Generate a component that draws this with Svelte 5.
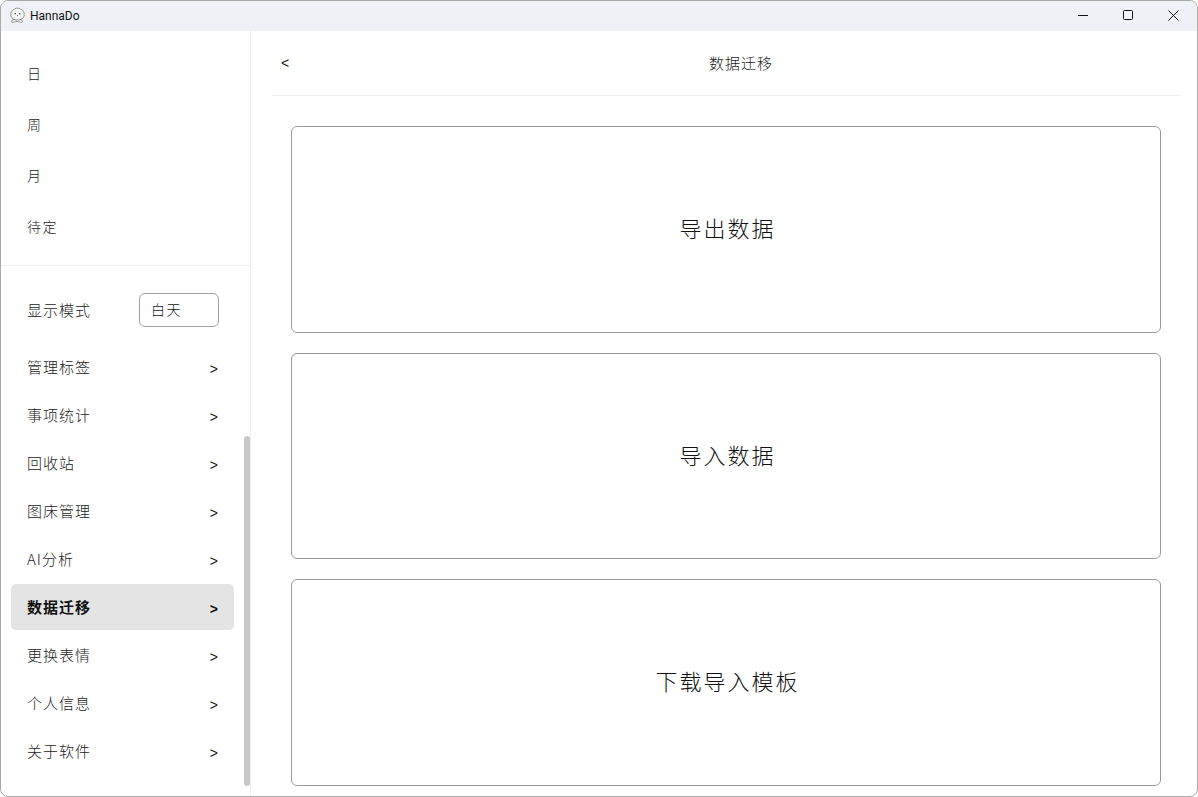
<script>
  const top = ['日', '周', '月', '待定'];
  const rows = ['管理标签', '事项统计', '回收站', '图床管理', 'AI分析', '数据迁移', '更换表情', '个人信息', '关于软件'];
  const active = '数据迁移';
  const cards = ['导出数据', '导入数据', '下载导入模板'];
</script>

<div class="window">
  <header class="titlebar">
    <div class="brand">
      <svg class="logo" viewBox="0 0 17 17" width="17" height="17" fill="#f6f6f6" stroke="#666" stroke-width="0.7">
        <path d="M5 12.500c-1.500.2-2.800 1-2.500 2.200.4 1 2 .9 3 .2.600.4 1.200-.1 1.500-.5h2c.3.400.9.900 1.500.5 1 .7 2.600.8 3-.2.300-1.200-1-2-2.500-2.200z"/>
        <path d="M5 2.700C6 1.300 7.300 1 8.500 1.300 9.700 1 11 1.300 12 2.700c1.200-.1 2 .8 2 1.800 1.200.6 1.600 1.900 1 2.900.6 1.100.2 2.400-1 2.900-.2 1.100-1 1.700-2 1.700-.7 1-2.200 1.200-3.500.8-1.300.4-2.800.2-3.500-.8-1 0-1.800-.6-2-1.700-1.200-.5-1.600-1.800-1-2.900-.6-1 -.2-2.300 1-2.900 0-1 .8-1.900 2-1.800z"/>
        <circle cx="6.200" cy="6.800" r=".7" fill="#333" stroke="none"/>
        <circle cx="10.800" cy="6.800" r=".7" fill="#333" stroke="none"/>
        <path d="M7.800 8.300h1.400L8.500 9.200z" fill="#333" stroke="none"/>
      </svg>
      <span>HannaDo</span>
    </div>
    <div class="controls">
      <svg viewBox="0 0 10 10" width="10" height="10"><path d="M0 5.500h10" stroke="#111" stroke-width="1"/></svg>
      <svg viewBox="0 0 10 10" width="10" height="10"><rect x=".5" y=".5" width="9" height="9" rx="1" fill="none" stroke="#111"/></svg>
      <svg viewBox="0 0 11 11" width="11" height="11"><path d="M.5 .5l10 10M10.500 .5l-10 10" stroke="#111" stroke-width="1"/></svg>
    </div>
  </header>

  <div class="body">
    <aside class="sidebar">
      <nav class="views">
        {#each top as t}
          <div class="view">{t}</div>
        {/each}
      </nav>
      <div class="settings">
        <div class="mode">
          <span>显示模式</span>
          <div class="select">白天</div>
        </div>
        <div class="rows">
          {#each rows as r}
            <div class="row" class:active={r === active}>
              <span>{r}</span>
              <span class="chev">&gt;</span>
            </div>
          {/each}
        </div>
      </div>
      <div class="scrollbar"></div>
    </aside>

    <main class="main">
      <div class="head">
        <span class="back">&lt;</span>
        <span class="title">数据迁移</span>
      </div>
      <div class="cards">
        {#each cards as c}
          <button class="card">{c}</button>
        {/each}
      </div>
    </main>
  </div>
</div>

<style>
  :global(body) {
    margin: 0;
    background: #fff;
  }
  .window {
    width: 1198px;
    height: 797px;
    box-sizing: border-box;
    border: 1px solid #a9a9a9;
    border-radius: 8px;
    overflow: hidden;
    background: #fff;
    display: flex;
    flex-direction: column;
    font-family: "Noto Sans CJK SC", "Liberation Sans", sans-serif;
    font-weight: 300;
    color: #222;
  }
  .titlebar {
    height: 30px;
    flex: none;
    box-sizing: border-box;
    padding-bottom: 2px;
    background: #eef2f7;
    display: flex;
    align-items: center;
    justify-content: space-between;
  }
  .brand {
    display: flex;
    align-items: center;
    gap: 4px;
    padding-left: 8px;
    font-family: Roboto, "Liberation Sans", sans-serif;
    font-size: 12px;
    font-weight: 400;
    color: #111;
  }
  .brand span {
    margin-top: 1px;
  }
  .logo {
    display: block;
    margin-top: 1px;
  }
  .controls {
    display: flex;
    align-items: center;
    gap: 35px;
    padding-right: 18px;
  }
  .controls svg {
    display: block;
  }
  .body {
    flex: 1;
    display: flex;
    min-height: 0;
  }
  .sidebar {
    position: relative;
    width: 250px;
    flex: none;
    box-sizing: border-box;
    border-right: 1px solid #eeeeee;
    overflow: hidden;
  }
  .views {
    padding-top: 18px;
    height: 235px;
    box-sizing: border-box;
    border-bottom: 1px solid #eeeeee;
  }
  .view {
    height: 51px;
    box-sizing: border-box;
    padding: 0 0 3px 26px;
    display: flex;
    align-items: center;
    font-size: 14px;
    letter-spacing: 1.500px;
  }
  .settings {
    padding: 27px 0 0 10px;
    width: 223px;
  }
  .mode {
    display: flex;
    align-items: center;
    gap: 48px;
    padding: 0 0 0 16px;
    height: 34px;
    font-size: 15px;
    letter-spacing: 1px;
  }
  .mode > span {
    margin-top: -2px;
  }
  .select {
    box-sizing: border-box;
    width: 80px;
    height: 34px;
    border: 1px solid #a0a0a0;
    border-radius: 6px;
    padding: 0 0 2px 11px;
    display: flex;
    align-items: center;
    font-size: 14px;
    letter-spacing: 1.500px;
    color: #111;
  }
  .rows {
    margin-top: 17px;
    display: flex;
    flex-direction: column;
    gap: 2px;
  }
  .row {
    height: 46px;
    box-sizing: border-box;
    padding: 0 16px 0 16px;
    display: flex;
    align-items: center;
    justify-content: space-between;
    border-radius: 5px;
    font-size: 15px;
    letter-spacing: 1px;
  }
  .row > span:first-child {
    margin-top: -2px;
  }
  .row.active {
    background: #e4e4e4;
    font-weight: 700;
    color: #111;
  }
  .chev {
    font-size: 14px;
    font-family: "Liberation Sans", sans-serif;
    letter-spacing: 0;
    margin-top: 3px;
  }
  .active .chev {
    margin-top: 4px;
  }
  .scrollbar {
    position: absolute;
    right: 0;
    top: 405px;
    width: 6px;
    height: 350px;
    background: #c8c8c8;
    border-radius: 3px;
  }
  .main {
    flex: 1;
    min-width: 0;
    padding: 0 16px 0 20px;
  }
  .head {
    position: relative;
    height: 65px;
    margin-left: 1px;
    padding-bottom: 2px;
    box-sizing: border-box;
    border-bottom: 1px solid #eeeeee;
    display: flex;
    align-items: center;
    justify-content: center;
  }
  .back {
    position: absolute;
    left: 9px;
    font-size: 14px;
    font-family: "Liberation Sans", sans-serif;
    margin-top: 2px;
  }
  .title {
    font-size: 15px;
    letter-spacing: 1px;
    padding-left: 29px;
  }
  .cards {
    padding: 30px 20px 0;
    display: flex;
    flex-direction: column;
    gap: 20px;
  }
  .card {
    height: 206.500px;
    box-sizing: border-box;
    background: #fff;
    border: 1px solid #999;
    border-radius: 6px;
    padding: 0 0 4px 3px;
    font-family: inherit;
    font-size: 22px;
    font-weight: 300;
    letter-spacing: 2px;
    color: #111;
  }
</style>
